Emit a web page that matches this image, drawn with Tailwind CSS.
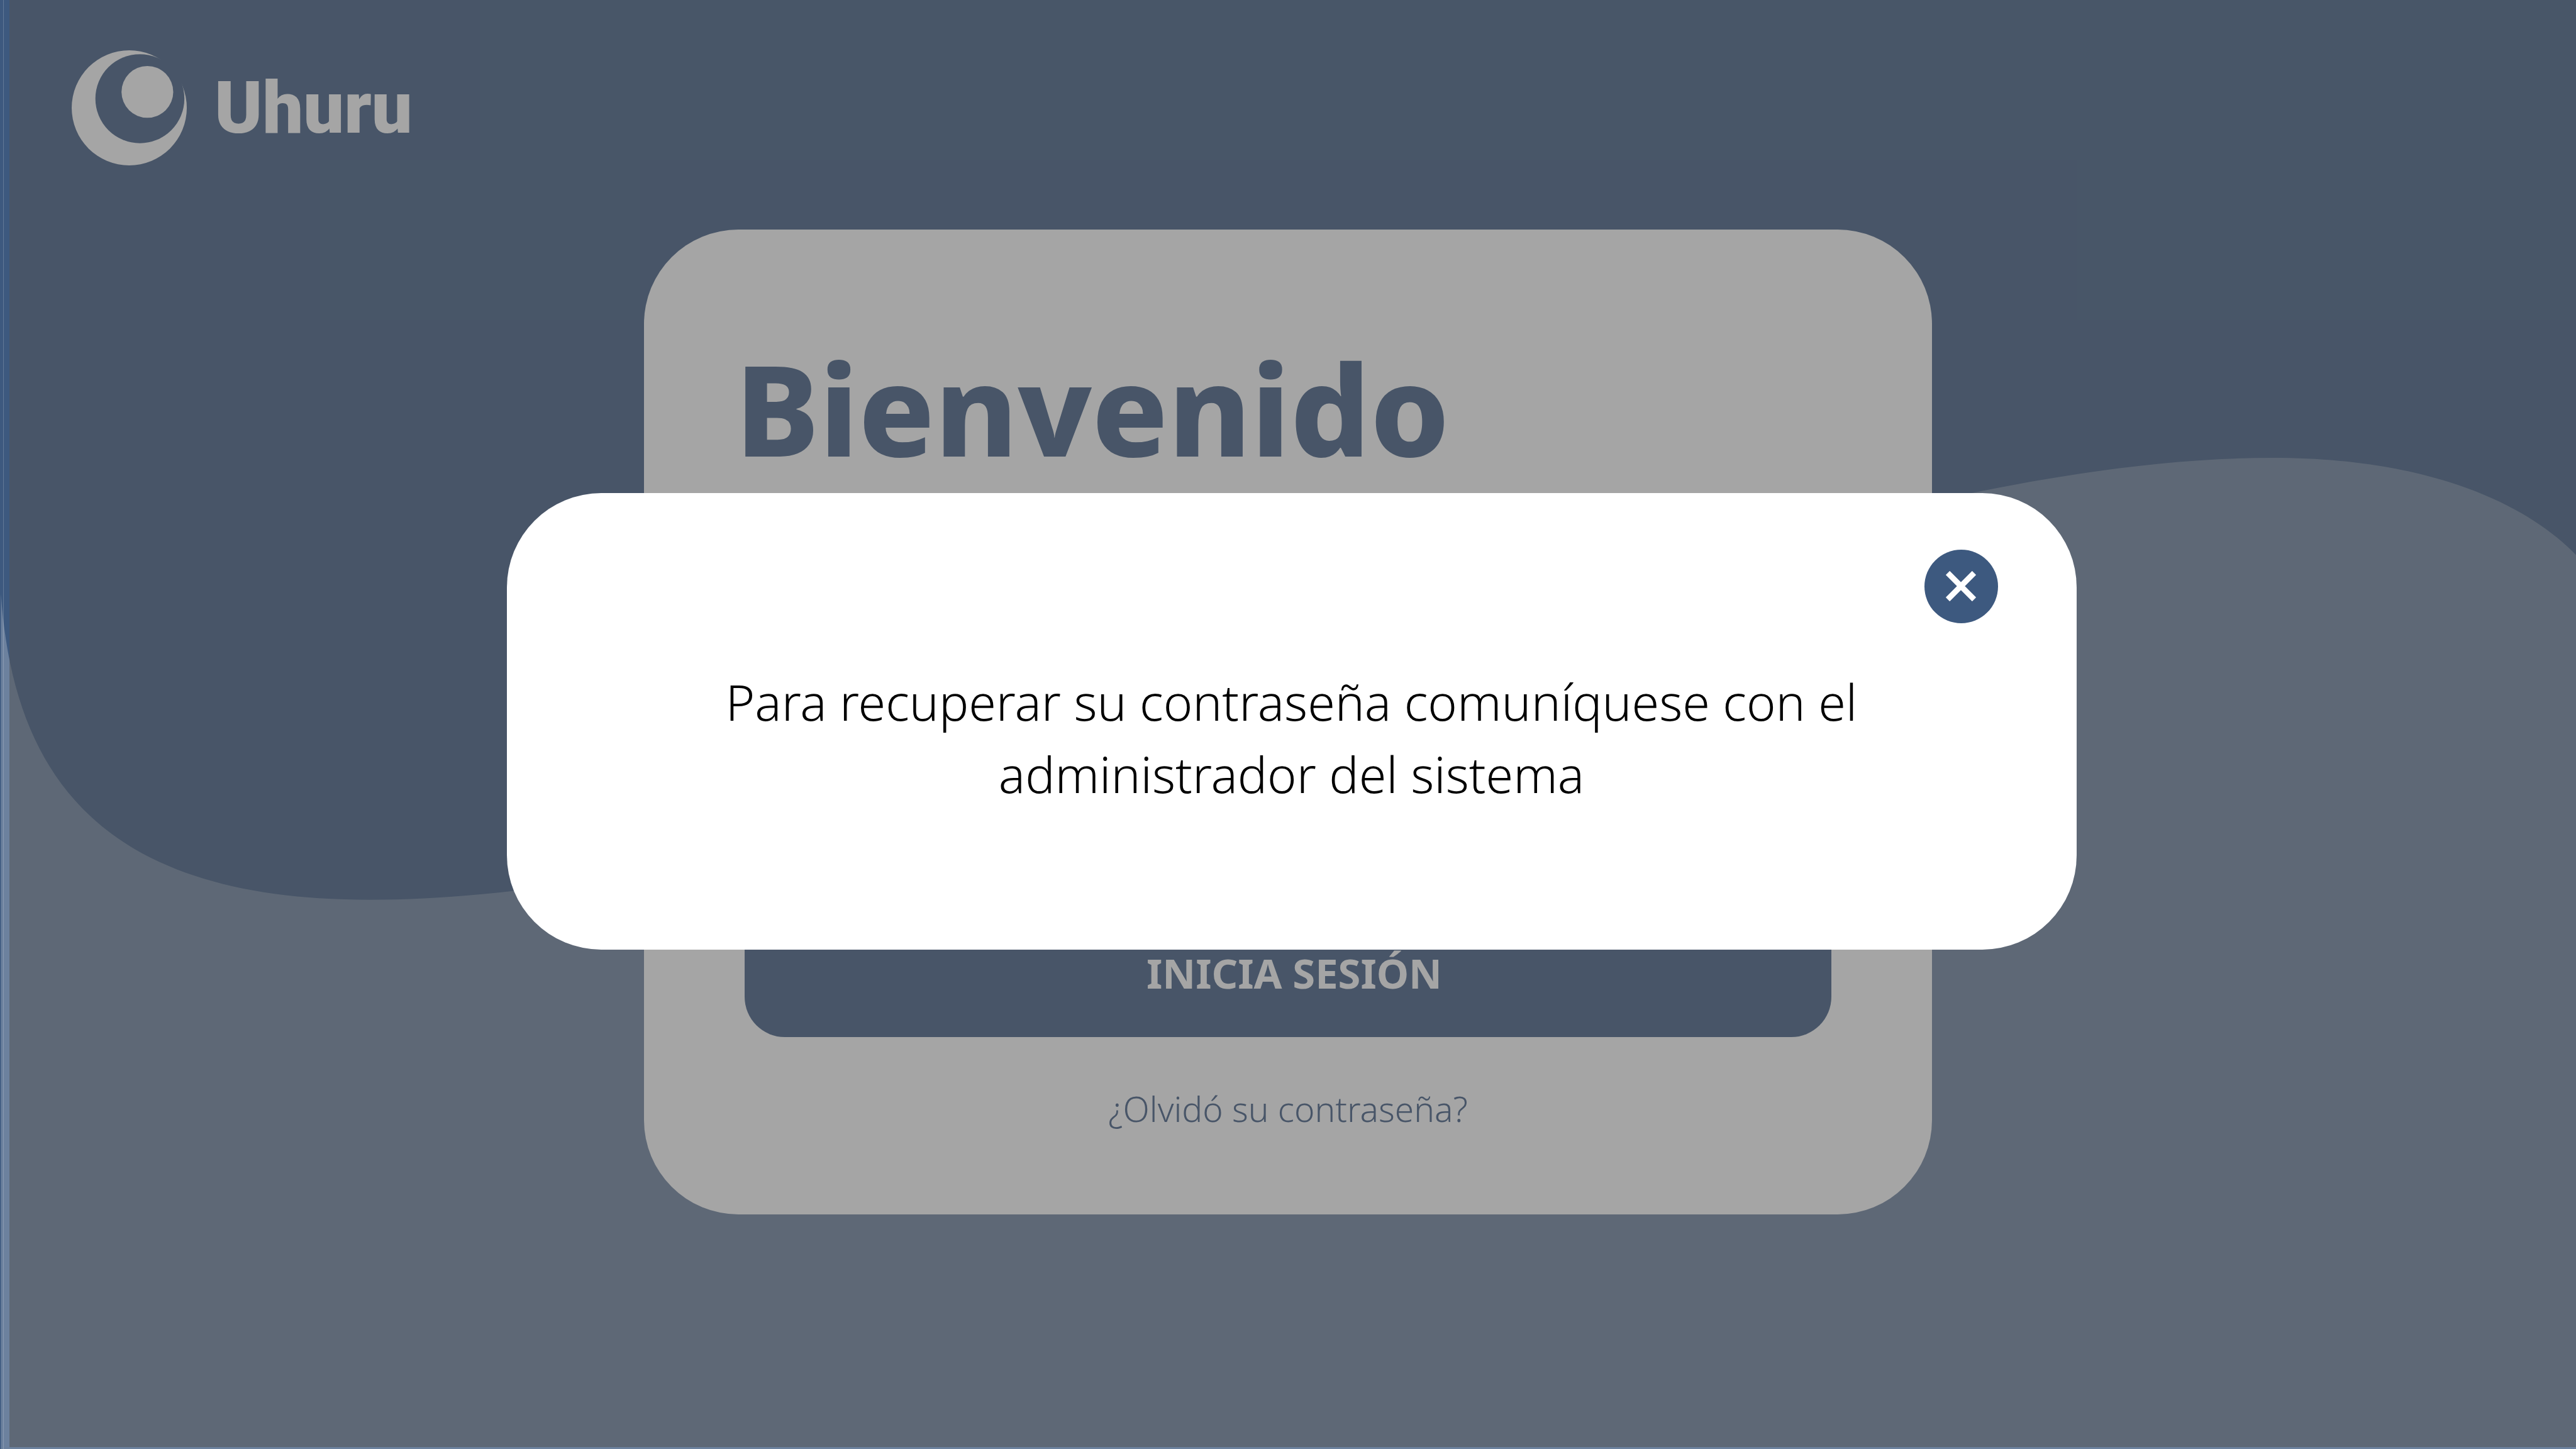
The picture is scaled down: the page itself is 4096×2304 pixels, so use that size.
<!DOCTYPE html>
<html lang="es">
<head>
<meta charset="utf-8">
<meta name="viewport" content="width=device-width, initial-scale=1">
<title>Uhuru</title>
<script src="https://cdn.jsdelivr.net/npm/@tailwindcss/browser@4"></script>
</head>
<body class="relative min-h-screen overflow-hidden bg-[#3d597f] font-['Noto_Sans',sans-serif]">
  <!-- Background wave -->
  <svg class="absolute inset-0 size-full" viewBox="0 0 5334 3000" preserveAspectRatio="none" aria-hidden="true">
    <path fill="#6c819e" d="M2 1230C30 1645 250 1863 765 1863C1895 1863 3600 948 4705 948C5035 948 5233 1045 5334 1149V3000H2Z"/>
  </svg>
  <div class="absolute inset-y-0 left-[5px] w-px bg-white/20"></div>

  <div class="relative flex flex-col">
    <header class="flex items-center gap-[44px] px-[114px] pt-20">
      <svg class="size-[183px]" viewBox="148 104 238 238" role="img" aria-label="Uhuru">
        <mask id="ring">
          <rect x="140" y="96" width="260" height="260" fill="white"/>
          <circle cx="289" cy="204" r="92" fill="black"/>
        </mask>
        <circle cx="267" cy="223" r="119" fill="white" mask="url(#ring)"/>
        <circle cx="304.500" cy="190" r="53.500" fill="white"/>
      </svg>
      <span class="font-['Roboto',sans-serif] text-[115px] leading-[115px] font-black text-white">Uhuru</span>
    </header>

    <main class="mx-auto mt-[102px] w-1/2 rounded-[150px] bg-white px-[145px] pt-[184px] pb-[138px]">
      <h1 class="text-[200px] leading-[200px] font-extrabold text-[#3d597f]">Bienvenido</h1>
      <form class="mt-[100px] flex flex-col gap-[94px] px-[15px]">
        <input type="text" aria-label="Usuario" class="h-[204px] rounded-[80px] border-4 border-[#3d597f] px-16 text-[65px]">
        <input type="password" aria-label="Contraseña" class="h-[204px] rounded-[80px] border-4 border-[#3d597f] px-16 text-[65px]">
        <button type="button" class="h-[204px] rounded-[64px] bg-[#3d597f] pl-5 text-[65px] leading-[80px] font-bold text-white">INICIA SESIÓN</button>
      </form>
      <p class="mt-[84px] text-center text-[55px] leading-[60px] font-[350]"><a href="#" class="text-[#3d597f]">¿Olvidó su contraseña?</a></p>
    </main>
  </div>

  <!-- Dimmed layer with the password notice -->
  <div class="absolute top-0 right-0 bottom-[3px] left-[15px] flex items-center justify-center bg-[#535353]/52 pr-1 pb-2">
    <section role="dialog" aria-modal="true" aria-labelledby="notice" class="flex w-[2496px] max-w-full flex-col rounded-[150px] bg-white px-[125px] pt-[90px] pb-[222px]">
      <button type="button" aria-label="Cerrar" class="flex size-[117px] items-center justify-center self-end rounded-full bg-[#3d597f]">
        <svg class="size-12" viewBox="0 0 48 48" stroke="white" stroke-width="9" aria-hidden="true">
          <path d="M3 3L45 45M45 3L3 45"/>
        </svg>
      </button>
      <p id="notice" class="mx-auto mt-[67px] max-w-[1900px] text-center text-[79px] leading-[115px] font-[350] text-black">Para recuperar su contraseña comuníquese con el administrador del sistema</p>
    </section>
  </div>
</body>
</html>
